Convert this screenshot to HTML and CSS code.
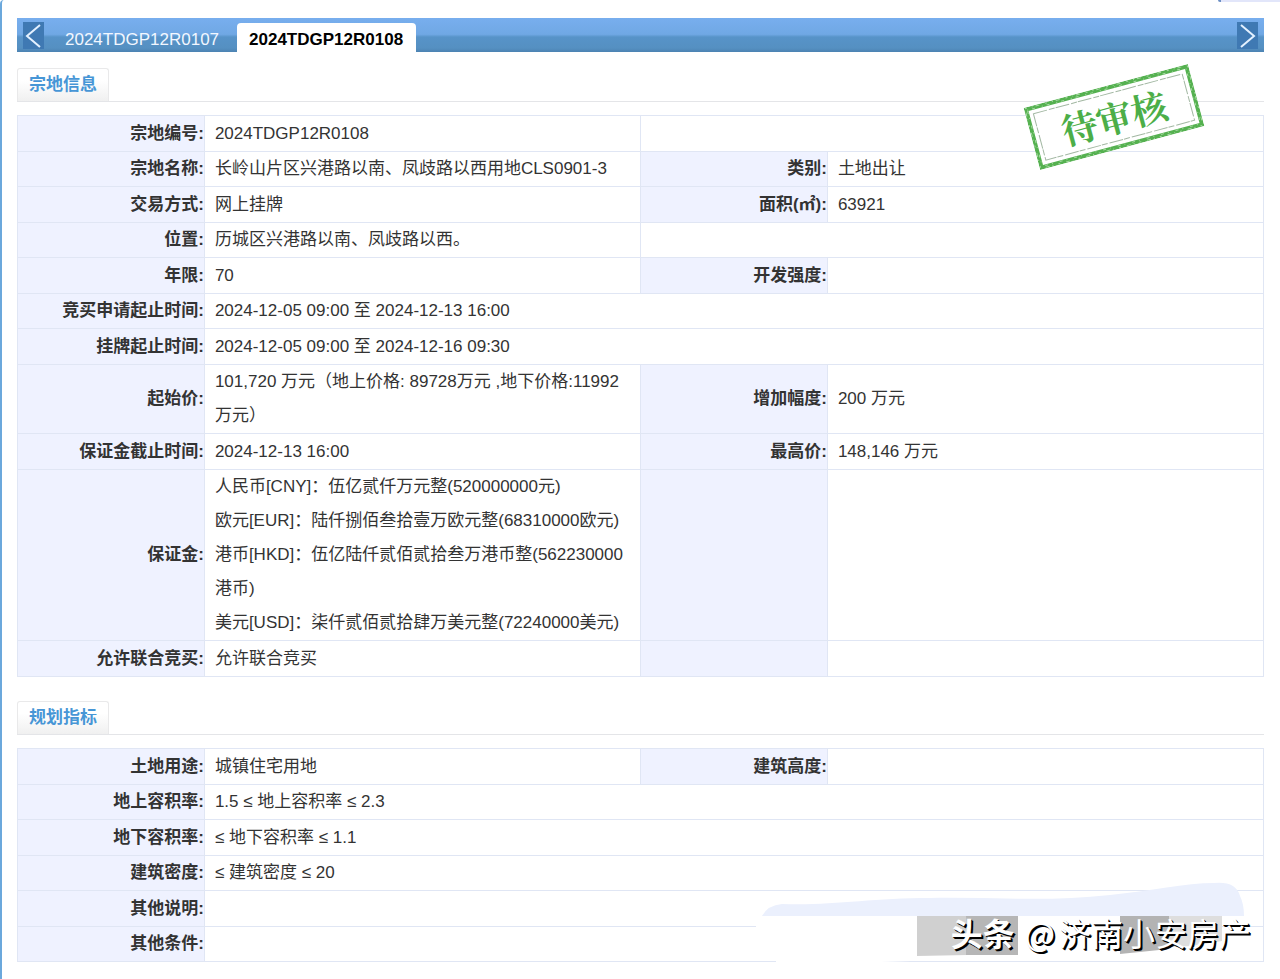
FILE: index.html
```html
<!DOCTYPE html>
<html lang="zh-CN">
<head>
<meta charset="utf-8">
<title>宗地信息</title>
<link rel="stylesheet" href="styles.css">
</head>
<body>
<div class="page">
  <span class="corner"></span>
  <nav class="tabs">
    <button class="arrow" type="button" aria-label="上一个"><svg viewBox="0 0 21 27"><path d="M17 3 4 14l13 11"/></svg></button>
    <a class="tab" href="#r0107">2024TDGP12R0107</a>
    <a class="tab tab-active" href="#r0108">2024TDGP12R0108</a>
    <button class="arrow arrow-next" type="button" aria-label="下一个"><svg viewBox="0 0 21 27"><path d="M4 3l13 11L4 25"/></svg></button>
  </nav>

  <section class="section">
    <div class="heading"><h2 class="heading-label">宗地信息</h2></div>
    <table class="info">
      <colgroup><col class="col-label"><col class="col-value"><col class="col-label"><col class="col-value"></colgroup>
      <tbody>
        <tr><th scope="row">宗地编号:</th><td>2024TDGP12R0108</td><td colspan="2"></td></tr>
        <tr><th scope="row">宗地名称:</th><td>长岭山片区兴港路以南、凤歧路以西用地CLS0901-3</td><th scope="row">类别:</th><td>土地出让</td></tr>
        <tr><th scope="row">交易方式:</th><td>网上挂牌</td><th scope="row">面积(㎡):</th><td>63921</td></tr>
        <tr><th scope="row">位置:</th><td>历城区兴港路以南、凤歧路以西。</td><td colspan="2"></td></tr>
        <tr><th scope="row">年限:</th><td>70</td><th scope="row">开发强度:</th><td></td></tr>
        <tr><th scope="row">竞买申请起止时间:</th><td colspan="3">2024-12-05 09:00 至 2024-12-13 16:00</td></tr>
        <tr><th scope="row">挂牌起止时间:</th><td colspan="3">2024-12-05 09:00 至 2024-12-16 09:30</td></tr>
        <tr><th scope="row">起始价:</th><td>101,720 万元（地上价格: 89728万元 ,地下价格:11992<br>万元）</td><th scope="row">增加幅度:</th><td>200 万元</td></tr>
        <tr><th scope="row">保证金截止时间:</th><td>2024-12-13 16:00</td><th scope="row">最高价:</th><td>148,146 万元</td></tr>
        <tr><th scope="row">保证金:</th><td>人民币[CNY]：伍亿贰仟万元整(520000000元)<br>欧元[EUR]：陆仟捌佰叁拾壹万欧元整(68310000欧元)<br>港币[HKD]：伍亿陆仟贰佰贰拾叁万港币整(562230000<br>港币)<br>美元[USD]：柒仟贰佰贰拾肆万美元整(72240000美元)</td><th></th><td></td></tr>
        <tr><th scope="row">允许联合竞买:</th><td>允许联合竞买</td><th></th><td></td></tr>
      </tbody>
    </table>
    <div class="stamp">
      <svg class="stamp-frame" viewBox="0 0 170 64" preserveAspectRatio="none">
        <rect class="stamp-edge" x="2" y="2" width="166" height="60"/>
        <rect class="stamp-wear" x="1" y="1" width="168" height="62"/>
        <rect class="stamp-wear stamp-wear-inner" x="3" y="3" width="164" height="58"/>
        <rect class="stamp-line" x="8" y="8" width="154" height="48"/>
      </svg>
      <span class="stamp-text">待审核</span>
    </div>
  </section>

  <section class="section section-next">
    <div class="heading"><h2 class="heading-label">规划指标</h2></div>
    <table class="info">
      <colgroup><col class="col-label"><col class="col-value"><col class="col-label"><col class="col-value"></colgroup>
      <tbody>
        <tr><th scope="row">土地用途:</th><td>城镇住宅用地</td><th scope="row">建筑高度:</th><td></td></tr>
        <tr><th scope="row">地上容积率:</th><td colspan="3">1.5 ≤ 地上容积率 ≤ 2.3</td></tr>
        <tr><th scope="row">地下容积率:</th><td colspan="3">≤ 地下容积率 ≤ 1.1</td></tr>
        <tr><th scope="row">建筑密度:</th><td colspan="3">≤ 建筑密度 ≤ 20</td></tr>
        <tr><th scope="row">其他说明:</th><td colspan="3"></td></tr>
        <tr><th scope="row">其他条件:</th><td colspan="3"></td></tr>
      </tbody>
    </table>
    <div class="watermark">
      <svg class="watermark-art" viewBox="0 0 540 109">
        <path fill="#fff" d="M22 46H480V72Q470 80 420 83L80 94H36V85L16 84V56Z"/>
        <path fill="#ebf0fd" d="M22 46Q28 35 42 34C90 36 130 28 190 28C250 27 310 32 370 25C410 21 446 13 474 13Q496 11 500 26Q504 34 504 46Z"/>
        <path fill="#d0d0d0" d="M177 46h51v39l-51 1z"/>
        <path fill="#b6b6b6" d="M226 46h52v39h-52V68l2-1z"/>
        <path fill="#b3b3b3" d="M380 46h49v33l-49 5z"/>
        <path fill="#dedede" d="M429 46h53v25l-30 5-23 1z"/>
      </svg>
      <p class="watermark-text"><b>头条</b><span class="watermark-name"><span>@</span><span>济南小安房产</span></span></p>
    </div>
  </section>
</div>
</body>
</html>
```
FILE: styles.css
```css
* { box-sizing: border-box; }

body {
  margin: 0;
  background: #fff;
  color: #333;
  font: 17px/34px "Liberation Sans", "Noto Sans CJK SC", sans-serif;
}

.page {
  position: relative;
  min-height: 100vh;
  padding: 18px 16px 17px 15px;
  border-left: 2px solid #6ba8dc;
  border-top-left-radius: 4px;
}

.corner {
  position: absolute;
  top: 0;
  right: 0;
  width: 62px;
  height: 2px;
  background: #e2e6fa;
  border-left: 3px solid #6c8fc4;
  border-bottom-left-radius: 2px;
}

.tabs {
  display: flex;
  align-items: flex-end;
  height: 34px;
  padding: 0 6px;
  background: linear-gradient(#78aeee, #70a8e4 48%, #5793c8 56%, #5590c2 88%, #4c83b2);
}

.arrow {
  align-self: center;
  width: 21px;
  height: 27px;
  padding: 0;
  border: 0;
  background: #3f79b3;
}

.arrow-next { margin-left: auto; }

.arrow svg {
  display: block;
  fill: none;
  stroke: #e4f1ff;
  stroke-width: 2;
}

.tab {
  height: 29px;
  padding: 0 12px;
  color: #f2f7ff;
  line-height: 34px;
  text-decoration: none;
}

.arrow + .tab { padding: 0 18px 0 21px; }

.tab-active {
  padding: 0 13px 0 12px;
  border-radius: 4px 4px 0 0;
  background: #fff;
  color: #000;
  font-weight: bold;
}

.section {
  position: relative;
  padding-top: 16px;
}

.section-next { padding-top: 24px; }

.heading {
  display: flex;
  margin-bottom: 13px;
  border-bottom: 1px solid #e4e5e8;
}

.heading-label {
  margin: 0;
  padding: 0 11px;
  border: 1px solid #e9e9ea;
  border-bottom: 0;
  border-radius: 3px 3px 0 0;
  background: linear-gradient(#fff 35%, #f0f0f0);
  color: #4796d6;
  font-size: 17px;
  line-height: 32px;
}

.info {
  width: 100%;
  table-layout: fixed;
  border-collapse: collapse;
  border: 1px solid #e0e6f4;
}

.col-label { width: 15%; }
.col-value { width: 35%; }

.info tr { height: 35px; }
.info tr:nth-child(odd) { height: 36px; }

.info th,
.info td {
  padding: 0 0 0 10px;
  border: 1px solid #e0e6f4;
  text-align: left;
}

.info th {
  background: #eff2ff;
  text-align: right;
}

.stamp {
  position: absolute;
  top: 33px;
  right: 65px;
  display: grid;
  place-items: center;
  width: 170px;
  height: 64px;
  transform: rotate(-15deg);
}

.stamp-frame {
  position: absolute;
  inset: 0;
  fill: none;
}

.stamp-edge { fill: #fff; stroke: #55b150; stroke-width: 4; }
.stamp-wear { stroke: #a6d9a2; stroke-dasharray: 2 5 1 3 4 6; }
.stamp-wear-inner { stroke-dasharray: 1 4 3 7; }
.stamp-line { stroke: #a3b8a3; stroke-dasharray: 14 2 6 1; }

.stamp-text {
  position: relative;
  color: #4cae48;
  font: bold 36px/48px "Noto Serif CJK SC", "Noto Sans CJK SC", serif;
}

.watermark {
  position: absolute;
  right: -16px;
  bottom: -17px;
  width: 540px;
}

.watermark-art { display: block; }

.watermark-text {
  position: absolute;
  top: 38px;
  right: 29px;
  display: flex;
  gap: 10px;
  margin: 0;
  color: #fff;
  font: 32px/48px "Noto Sans CJK SC", sans-serif;
  text-shadow: 1px 1px #000, 2px 2px #000;
  white-space: nowrap;
}

.watermark-name {
  display: flex;
  gap: 4px;
}
```
